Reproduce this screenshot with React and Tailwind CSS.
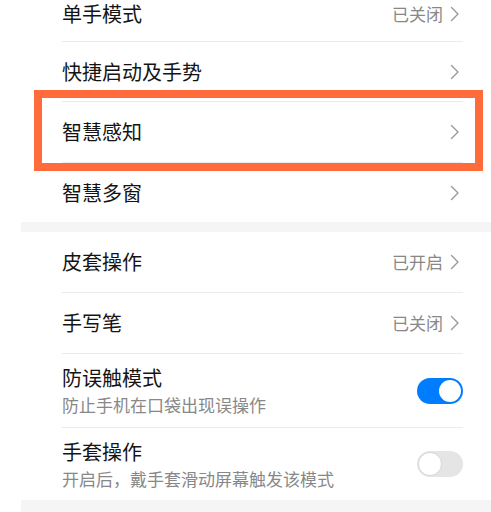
const font = { fontFamily: '"Noto Sans CJK SC", "Noto Sans", sans-serif' };

const Chevron = () => (
  <svg width="10" height="16" viewBox="0 0 10 16" className="ml-[7px] mr-[3px] shrink-0">
    <path d="M1.5 1.5 L8 8 L1.5 14.5" fill="none" stroke="#999999" strokeWidth="1.4" strokeLinecap="round" strokeLinejoin="round" />
  </svg>
);

const LinkRow = ({ title, value, last, className = "h-[61px]" }) => (
  <div className={`flex items-center ${className} ${last ? "" : "border-b border-[#ebebeb]"}`}>
    <span className="flex-1 text-[20px] leading-[26px] text-[#141414]">{title}</span>
    {value && <span className="text-[17px] leading-[22px] text-[#888888]">{value}</span>}
    <Chevron />
  </div>
);

const Toggle = ({ on }) =>
  on ? (
    <div className="flex h-[26px] w-[46px] shrink-0 items-center justify-end rounded-full bg-[#007dff] p-[2px]">
      <div className="h-[22px] w-[22px] rounded-full bg-white" />
    </div>
  ) : (
    <div className="flex h-[26px] w-[46px] shrink-0 items-center justify-start rounded-full bg-[#e5e5e5] p-[1px]">
      <div className="h-[24px] w-[24px] rounded-full border border-[#d6d6d6] bg-white" />
    </div>
  );

const SwitchRow = ({ title, desc, on, last, className }) => (
  <div className={`flex items-center ${className} ${last ? "" : "border-b border-[#ebebeb]"}`}>
    <div className="flex flex-1 flex-col">
      <span className="text-[20px] leading-[26px] text-[#141414]">{title}</span>
      <span className="mt-[3px] text-[17px] leading-[22px] text-[#888888]">{desc}</span>
    </div>
    <Toggle on={on} />
  </div>
);

export default function App() {
  return (
    <div className="relative h-[512px] w-[491px] overflow-hidden bg-white" style={font}>
      <div className="ml-[21px] -mt-[14px]">
        <div className="pl-[41px] pr-[28px]">
          <LinkRow title="单手模式" value="已关闭" className="h-[56px]" />
          <LinkRow title="快捷启动及手势" className="h-[60px]" />
          <LinkRow title="智慧感知" />
          <LinkRow title="智慧多窗" last className="h-[59px]" />
        </div>
        <div className="h-[10px] bg-[#f5f5f5]" />
        <div className="pl-[41px] pr-[28px]">
          <LinkRow title="皮套操作" value="已开启" />
          <LinkRow title="手写笔" value="已关闭" />
          <SwitchRow title="防误触模式" desc="防止手机在口袋出现误操作" on className="h-[74px]" />
          <SwitchRow title="手套操作" desc="开启后，戴手套滑动屏幕触发该模式" last className="h-[72px]" />
        </div>
        <div className="h-[20px] bg-[#f5f5f5]" />
      </div>
      <div className="pointer-events-none absolute left-[34px] top-[90px] h-[81px] w-[449px] border-[8px] border-[#ff6b3b]" />
    </div>
  );
}
